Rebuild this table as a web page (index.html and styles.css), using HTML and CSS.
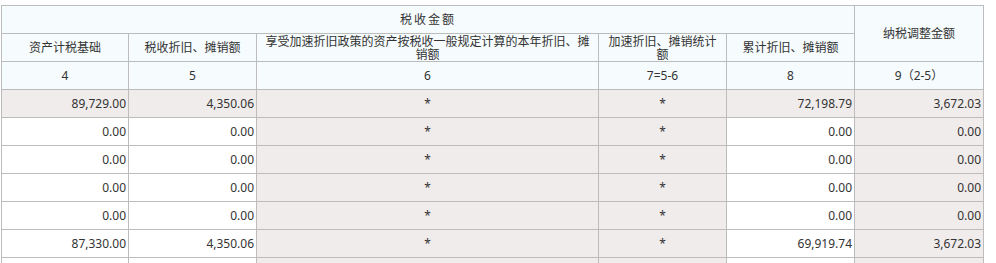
FILE: index.html
```html
<!DOCTYPE html>
<html lang="zh-CN">
<head>
<meta charset="utf-8">
<title>税收金额</title>
<link rel="stylesheet" href="styles.css">
</head>
<body>
<div class="sheet">
  <div class="grid">
    <div class="cell head span-top spaced">税收金额</div>
    <div class="cell head span-side">纳税调整金额</div>

    <div class="cell head">资产计税基础</div>
    <div class="cell head">税收折旧、摊销额</div>
    <div class="cell head wrap">享受加速折旧政策的资产按税收一般规定计算的本年折旧、摊销额</div>
    <div class="cell head wrap narrow">加速折旧、摊销统计额</div>
    <div class="cell head">累计折旧、摊销额</div>

    <div class="cell head">4</div>
    <div class="cell head">5</div>
    <div class="cell head">6</div>
    <div class="cell head">7=5-6</div>
    <div class="cell head">8</div>
    <div class="cell head">9（2-5）</div>

    <div class="cell num gray">89,729.00</div>
    <div class="cell num gray">4,350.06</div>
    <div class="cell mid gray">*</div>
    <div class="cell mid gray">*</div>
    <div class="cell num gray">72,198.79</div>
    <div class="cell num gray">3,672.03</div>

    <div class="cell num">0.00</div>
    <div class="cell num">0.00</div>
    <div class="cell mid gray">*</div>
    <div class="cell mid gray">*</div>
    <div class="cell num">0.00</div>
    <div class="cell num gray">0.00</div>

    <div class="cell num">0.00</div>
    <div class="cell num">0.00</div>
    <div class="cell mid gray">*</div>
    <div class="cell mid gray">*</div>
    <div class="cell num">0.00</div>
    <div class="cell num gray">0.00</div>

    <div class="cell num">0.00</div>
    <div class="cell num">0.00</div>
    <div class="cell mid gray">*</div>
    <div class="cell mid gray">*</div>
    <div class="cell num">0.00</div>
    <div class="cell num gray">0.00</div>

    <div class="cell num">0.00</div>
    <div class="cell num">0.00</div>
    <div class="cell mid gray">*</div>
    <div class="cell mid gray">*</div>
    <div class="cell num">0.00</div>
    <div class="cell num gray">0.00</div>

    <div class="cell num">87,330.00</div>
    <div class="cell num">4,350.06</div>
    <div class="cell mid gray">*</div>
    <div class="cell mid gray">*</div>
    <div class="cell num">69,919.74</div>
    <div class="cell num gray">3,672.03</div>

    <div class="cell num"></div>
    <div class="cell num"></div>
    <div class="cell mid gray"></div>
    <div class="cell mid gray"></div>
    <div class="cell num"></div>
    <div class="cell num gray"></div>
  </div>
</div>
</body>
</html>
```

FILE: styles.css
```css
html, body {
  margin: 0;
  padding: 0;
  background: #ffffff;
  overflow: hidden;
}

.sheet {
  box-sizing: border-box;
  height: 263px;
  overflow: hidden;
  padding: 5px 0 0 1px;
}

.grid {
  display: grid;
  grid-template-columns: 127px 128px 342px 128px 128px 129px;
  grid-auto-rows: 28px;
  width: max-content;
  border-left: 1px solid #bcbcbc;
  border-top: 1px solid #bcbcbc;
  font-family: "Noto Sans", "Noto Sans CJK SC", sans-serif;
  font-size: 12px;
  color: #333333;
}

.cell {
  box-sizing: border-box;
  border-right: 1px solid #bcbcbc;
  border-bottom: 1px solid #bcbcbc;
  display: flex;
  align-items: center;
  background: #ffffff;
  line-height: 13px;
  overflow: hidden;
}

.head {
  background: #f6fbfd;
  justify-content: center;
  text-align: center;
  padding: 0 2px;
}

.span-top {
  grid-column: 1 / 6;
}

.span-side {
  grid-column: 6;
  grid-row: 1 / 3;
}

.spaced {
  letter-spacing: 2px;
}

.wrap {
  padding: 0 3px;
}

.narrow {
  padding: 0 7px;
}

.num {
  justify-content: flex-end;
  padding-right: 2px;
}

.mid {
  justify-content: center;
}

.gray {
  background: #f0ecec;
}
```
